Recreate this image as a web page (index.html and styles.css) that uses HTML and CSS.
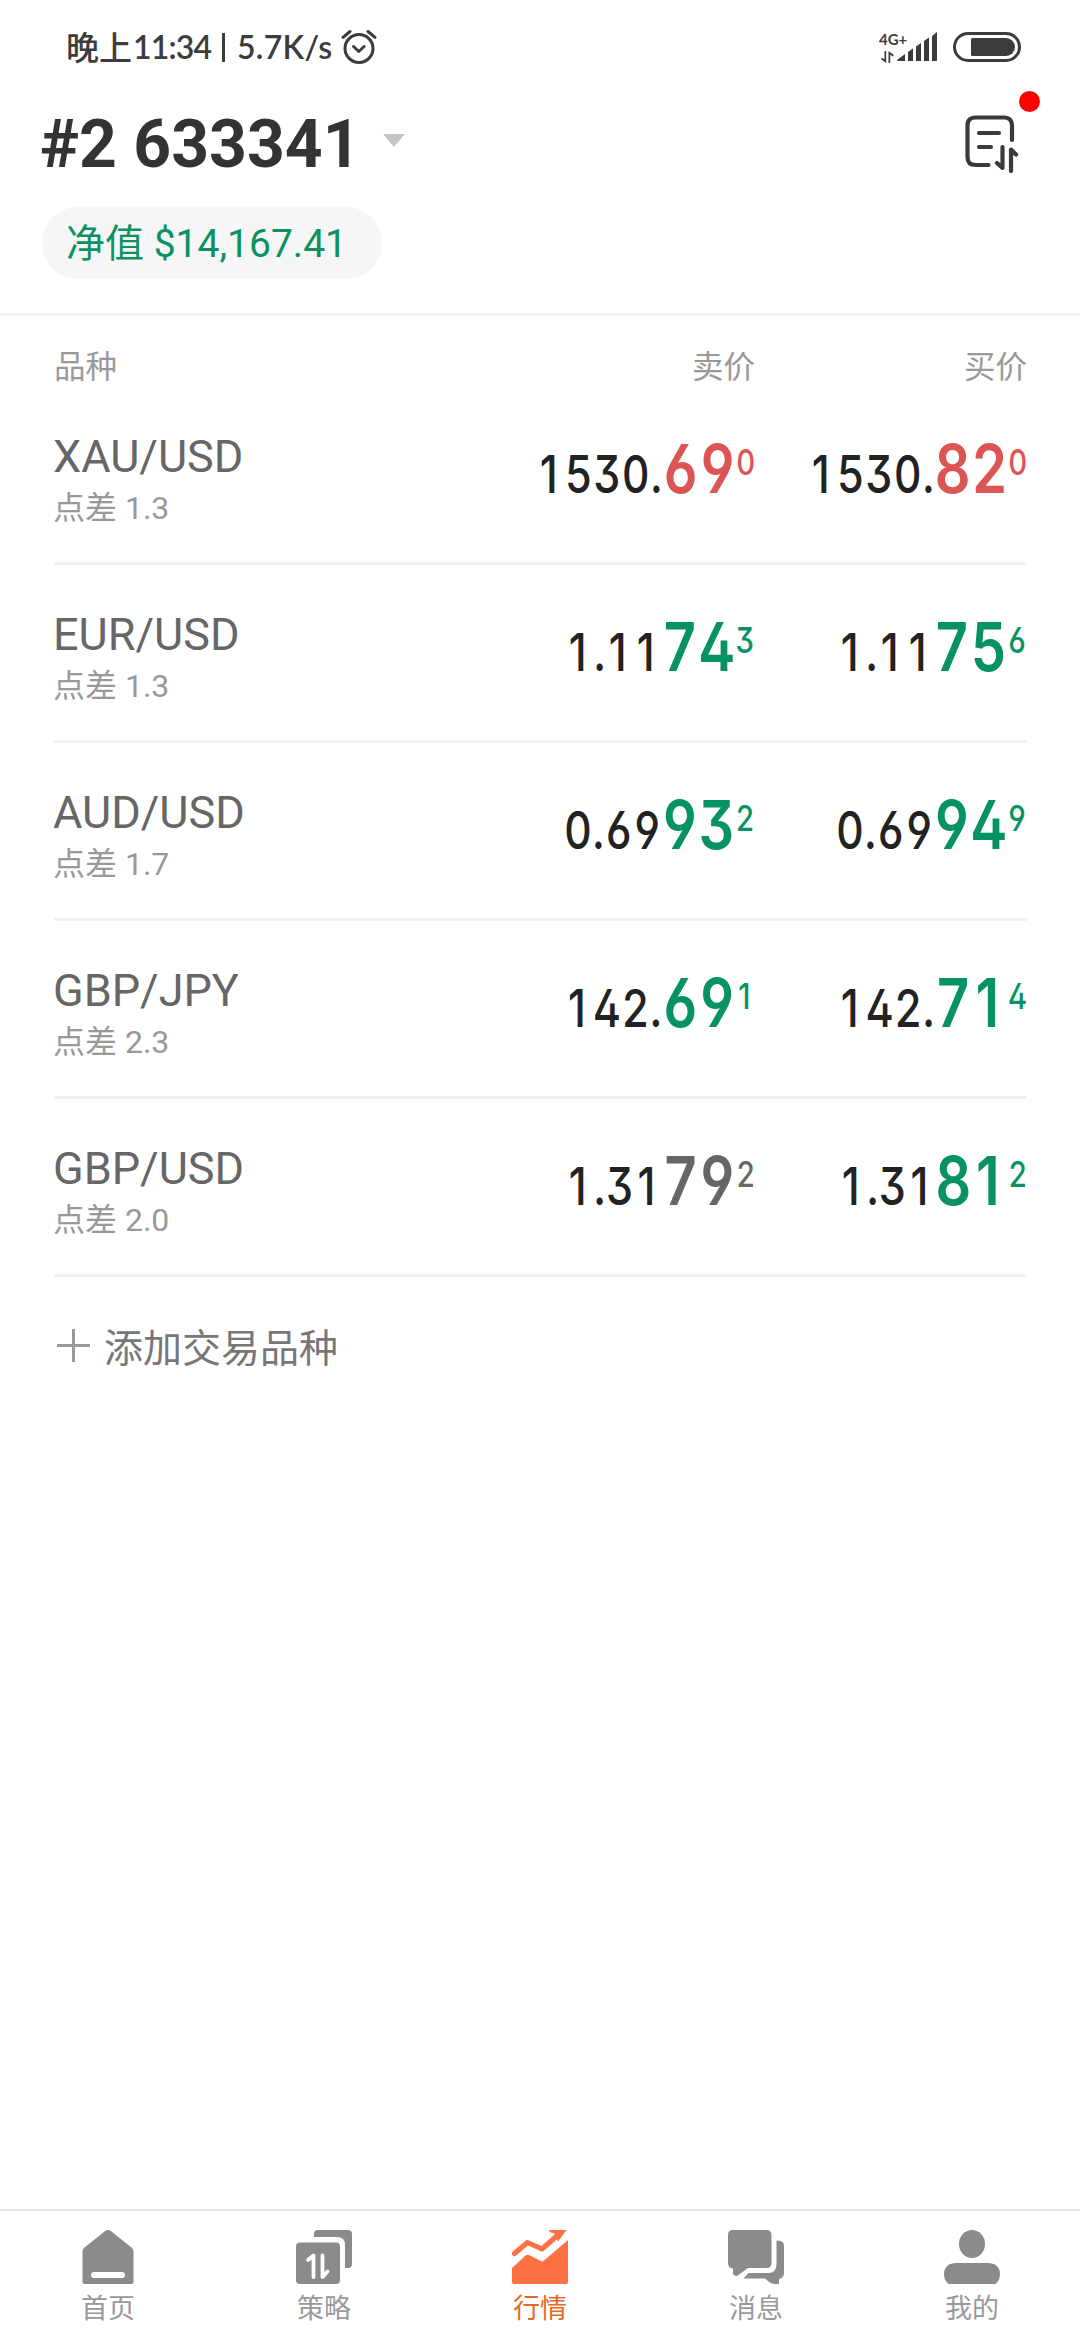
FILE: index.html
```html
<!DOCTYPE html>
<html lang="zh-CN">
<head>
<meta charset="utf-8">
<title>行情</title>
<link rel="stylesheet" href="styles.css">
</head>
<body>
<div class="screen">
  <div class="status">
    <span class="status-cjk">晚上</span><span class="status-time">11:34</span><span class="status-bar"></span><span class="status-speed">5.7K/s</span>
    <svg class="alarm" width="36" height="36" viewBox="0 0 36 36" fill="none" stroke="#3c3c3c" stroke-width="3" stroke-linecap="round" stroke-linejoin="round">
      <circle cx="18" cy="19.5" r="14"/><path d="M12.5 17.5l5.3 5 5.3-5"/><path d="M2 8.300l7-5.800M34 8.300l-7-5.800"/>
    </svg>
    <div class="status-right">
      <div class="network">
        <span class="network-type">4G+</span>
        <svg width="13" height="12" viewBox="0 0 13 12" fill="#3c3c3c"><path d="M3.500 0h1.700v12L0 8.200l1-1.500 2.500 1.600zM7.500 12h1.700V3.800l2.700 1.800 1-1.500L7.500 0z"/></svg>
      </div>
      <svg class="signal" width="41" height="30" viewBox="0 0 41 30" fill="#3c3c3c"><path d="M0 28l8-6v7H1.500Q0 29 0 28zM11 20l5-3.500V29h-4.500q-.5 0-.5-.5zM19 14.500l5-3.500v18h-4.500q-.5 0-.5-.5zM27 9l5-3.500V29h-4.500q-.5 0-.5-.5zM35 4l5-4v28.500q0 .5-.5.500h-4q-.5 0-.5-.5z"/></svg>
      <svg class="battery" width="68" height="30" viewBox="0 0 68 30"><rect x="1.500" y="1.500" width="65" height="27" rx="13.500" fill="none" stroke="#3c3c3c" stroke-width="3"/><path d="M19.500 6H53a9 9 0 0 1 0 18H19.500Q18 24 18 22.500v-15Q18 6 19.500 6z" fill="#3c3c3c"/></svg>
    </div>
  </div>

  <header class="header">
    <div class="account">
      <h1 class="account-name">#2 633341</h1>
      <svg class="caret" width="22" height="13" viewBox="0 0 22 13"><path d="M0 0h22L11 13z" fill="#c4c4c4"/></svg>
      <div class="orders">
        <svg width="54" height="58" viewBox="0 0 54 58" fill="none" stroke="#3a3a3a" stroke-width="4.200" stroke-linecap="round" stroke-linejoin="round">
          <path d="M47 25V10.500Q47 2.500 39 2.500H10.500Q2.500 2.500 2.500 10.500v31.500Q2.500 50 10.500 50H23.500"/>
          <path d="M14 18h20M14 32h12"/>
          <path d="M37.500 32V53L32 48M46 56V34.500l5 5" />
        </svg>
        <span class="dot"></span>
      </div>
    </div>
    <div class="equity">净值 $14,167.41</div>
  </header>

  <main class="quotes">
    <div class="row head"><span>品种</span><span class="cell">卖价</span><span class="cell">买价</span></div>
    <div class="row quote">
      <div><div class="symbol">XAU/USD</div><div class="spread">点差 1.3</div></div>
      <div class="cell"><span class="price down"><u>1</u>530.<b>69</b><sup>0</sup></span></div>
      <div class="cell"><span class="price down"><u>1</u>530.<b>82</b><sup>0</sup></span></div>
    </div>
    <div class="row quote">
      <div><div class="symbol">EUR/USD</div><div class="spread">点差 1.3</div></div>
      <div class="cell"><span class="price up"><u>1</u>.<u>1</u><u>1</u><b>74</b><sup>3</sup></span></div>
      <div class="cell"><span class="price up"><u>1</u>.<u>1</u><u>1</u><b>75</b><sup>6</sup></span></div>
    </div>
    <div class="row quote">
      <div><div class="symbol">AUD/USD</div><div class="spread">点差 1.7</div></div>
      <div class="cell"><span class="price up">0.69<b>93</b><sup>2</sup></span></div>
      <div class="cell"><span class="price up">0.69<b>94</b><sup>9</sup></span></div>
    </div>
    <div class="row quote">
      <div><div class="symbol">GBP/JPY</div><div class="spread">点差 2.3</div></div>
      <div class="cell"><span class="price up"><u>1</u>42.<b>69</b><sup><u>1</u></sup></span></div>
      <div class="cell"><span class="price up"><u>1</u>42.<b>7<u>1</u></b><sup>4</sup></span></div>
    </div>
    <div class="row quote">
      <div><div class="symbol">GBP/USD</div><div class="spread">点差 2.0</div></div>
      <div class="cell"><span class="price flat"><u>1</u>.3<u>1</u><b>79</b><sup>2</sup></span></div>
      <div class="cell"><span class="price up"><u>1</u>.3<u>1</u><b>8<u>1</u></b><sup>2</sup></span></div>
    </div>
    <div class="add">
      <svg width="33" height="33" viewBox="0 0 33 33" stroke="#999" stroke-width="3"><path d="M0 16.500h33M16.500 0v33"/></svg>
      <span>添加交易品种</span>
    </div>
  </main>

  <nav class="tabs">
    <div class="tab">
      <svg width="56" height="54" viewBox="0 0 56 54"><path d="M25.500.8Q28-.8 30.500.8L51.500 17.500Q53.500 19 53.500 21.500V51.500Q53.500 54 51 54H5Q2.500 54 2.500 51.500V21.500Q2.500 19 4.500 17.500z" fill="#8a8b8c"/><rect x="11" y="42" width="34" height="6" rx="3" fill="#fff"/></svg>
      <span>首页</span>
    </div>
    <div class="tab">
      <svg width="56" height="54" viewBox="0 0 56 54"><path d="M18 7V4Q18 0 22 0H52Q56 0 56 4V34Q56 38 52 38H49V15Q49 7 41 7z" fill="#8a8b8c"/><rect y="12.500" width="44" height="41.500" rx="4" fill="#8a8b8c"/><path d="M12 30l5.500-4.500V47M26.500 25.500V47l5-5.500" fill="none" stroke="#fff" stroke-width="3.800" stroke-linecap="round" stroke-linejoin="round"/></svg>
      <span>策略</span>
    </div>
    <div class="tab active">
      <svg width="56" height="54" viewBox="0 0 56 54"><path d="M0 38L13.500 25.500Q15.500 24 17.500 25.200L30 31.500Q31 31.500 32 30.500L56 10V52Q56 54 54 54H2Q0 54 0 52z" fill="#ff7043"/><path d="M2.500 23.500L15.500 12.500 30 19 46 5" fill="none" stroke="#ff7043" stroke-width="5.200" stroke-linecap="round" stroke-linejoin="round"/><path d="M37 0H54.500L46 11.500 42.500 3.500 37.500 2z" fill="#ff7043"/></svg>
      <span>行情</span>
    </div>
    <div class="tab">
      <svg width="56" height="54" viewBox="0 0 56 54" fill="#8a8b8c"><path d="M5 0H38.500Q43.500 0 43.500 5V33Q43.500 38 38.500 38H20L9 46Q5 46 5 43V38.500Q0 38 0 33V5Q0 0 5 0z"/><path d="M48.500 10.500Q56 10.500 56 15.500V43Q56 48 51 49V54H46.500Q43 54 37 48.500H15.500L20.500 43H40.500Q48.500 43 48.500 34z"/></svg>
      <span>消息</span>
    </div>
    <div class="tab">
      <svg width="56" height="54" viewBox="0 0 56 54" fill="#8a8b8c"><ellipse cx="28" cy="14" rx="13" ry="14"/><path d="M13 33H43Q56 33 56 44.500 56 50 51.500 54H4.500Q0 50 0 44.500 0 33 13 33z"/></svg>
      <span>我的</span>
    </div>
  </nav>
</div>
</body>
</html>
```

FILE: styles.css
```css
* { box-sizing: border-box; }
body {
  margin: 0;
  background: #fff;
  font-family: Roboto, "Noto Sans CJK SC", sans-serif;
}
.screen {
  width: 1080px;
  height: 2340px;
  display: flex;
  flex-direction: column;
}

/* status bar */
.status {
  height: 94px;
  padding: 0 59px 0 66px;
  display: flex;
  align-items: center;
  color: #3c3c3c;
  font: 500 33px/92px Lato, "Noto Sans CJK SC", sans-serif;
}
.status-cjk { width: 67px; }
.status-time { width: 80px; font-size: 32px; font-weight: 600; letter-spacing: -.8px; }
.status-bar { width: 3px; height: 29px; margin: 0 12px 0 9px; background: #3c3c3c; }
.status-speed { width: 97px; font-size: 32px; font-weight: 600; letter-spacing: .3px; }
.alarm { margin-left: 7px; }
.status-right { margin-left: auto; display: flex; align-items: center; }
.network { display: flex; flex-direction: column; gap: 5px; width: 31px; }
.network svg { margin-left: 2px; }
.network-type { font: 700 15px/14px Lato, sans-serif; }
.signal { margin-left: -13px; }
.battery { margin-left: 15px; }

/* account header */
.header {
  height: 222px;
  padding: 0 42px;
  border-bottom: 3px solid #f1f1f1;
}
.account { height: 100px; display: flex; align-items: center; }
.account-name {
  margin: 2px 0 0 -2px;
  font-size: 66px;
  font-weight: 700;
  line-height: 100px;
  color: #333;
}
.caret { margin-left: 22px; margin-top: -8px; }
.orders { position: relative; width: 54px; height: 58px; margin-left: auto; margin-right: 19px; }
.dot {
  position: absolute;
  top: -24px;
  left: 54px;
  width: 21px;
  height: 21px;
  border-radius: 50%;
  background: #f00;
}
.equity {
  width: 340px;
  height: 72px;
  margin-top: 13px;
  padding-left: 24px;
  border-radius: 36px;
  background: #f6f6f6;
  color: #0d9160;
  font-size: 39px;
  line-height: 74px;
  white-space: nowrap;
}

/* quotes */
.quotes { flex: 1; padding: 0 53px 0 54px; }
.row { display: grid; grid-template-columns: 1fr 300px 272px; }
.cell { text-align: right; }
.head {
  height: 71px;
  padding-top: 34px;
  font-size: 31.500px;
  line-height: 36px;
  color: #999;
}
.quote { height: 178px; border-bottom: 3px solid #f1f1f1; }
.symbol { margin-top: 43px; margin-left: -1px; font-size: 45px; line-height: 54px; color: #666; }
.spread { margin-top: 4px; margin-left: -1px; font-size: 32px; line-height: 40px; color: #999; }
.price {
  display: inline-block;
  margin-top: 48px;
  font: 500 52px/80px Inter, sans-serif;
  font-feature-settings: "tnum", "ss01";
  letter-spacing: .7px;
  color: #222;
  white-space: nowrap;
  transform: scaleX(.83);
  transform-origin: right;
}
/* the figure one is drawn without its foot, on the same advance as the others */
.price u {
  display: inline-block;
  width: calc(.635em + .7px);
  padding-right: .08em;
  text-align: center;
  text-decoration: none;
  font-feature-settings: "tnum" 0;
}
.price b { font-size: 67.500px; font-weight: 600; line-height: 1; }
.price sup { font-size: 35.500px; font-weight: 500; line-height: 1; letter-spacing: 0; vertical-align: 18px; }
.down b, .down sup { color: #dc5555; }
.up b, .up sup { color: #079361; }
.flat b, .flat sup { color: #666; }
.add {
  height: 136px;
  padding-left: 3px;
  display: flex;
  align-items: center;
  gap: 14px;
  color: #777;
  font-size: 39px;
}

/* bottom tabs */
.tabs {
  height: 131px;
  border-top: 2px solid #e4e4e4;
  display: grid;
  grid-template-columns: repeat(5, 1fr);
}
.tab {
  padding-top: 19px;
  display: flex;
  flex-direction: column;
  align-items: center;
  font-size: 27px;
  line-height: 36px;
  color: #999;
}
.tab span { margin-top: 7px; }
.active { color: #e8691f; }
```
